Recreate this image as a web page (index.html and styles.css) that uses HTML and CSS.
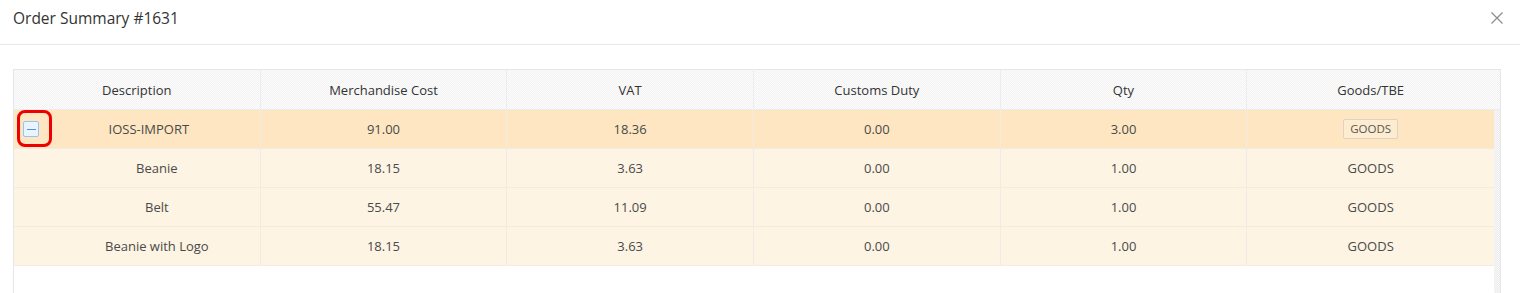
FILE: index.html
```html
<!DOCTYPE html>
<html>
<head>
<meta charset="utf-8">
<link rel="stylesheet" href="styles.css">
</head>
<body>
<div class="modal">
  <div class="modal-header">
    <div class="modal-title">Order Summary #1631</div>
    <button class="close" aria-label="Close">
      <svg width="12" height="12" viewBox="0 0 12 12"><path d="M0.5 0.5 L11.5 11.5 M11.5 0.5 L0.5 11.5" stroke="#8c8c8c" stroke-width="1.2" fill="none"/></svg>
    </button>
  </div>
  <div class="modal-body">
    <div class="table">
      <div class="thead">
        <div class="th">Description</div>
        <div class="th">Merchandise Cost</div>
        <div class="th">VAT</div>
        <div class="th">Customs Duty</div>
        <div class="th">Qty</div>
        <div class="th last">Goods/TBE</div>
      </div>
      <div class="tbody-wrap">
        <div class="tbody">
          <div class="tr parent">
            <div class="td first">
              <span class="expand"><span class="minus"></span></span>
              <span class="mark"></span>
              IOSS-IMPORT
            </div>
            <div class="td">91.00</div>
            <div class="td">18.36</div>
            <div class="td">0.00</div>
            <div class="td">3.00</div>
            <div class="td last"><span class="tag">GOODS</span></div>
          </div>
          <div class="tr child">
            <div class="td first">Beanie</div>
            <div class="td">18.15</div>
            <div class="td">3.63</div>
            <div class="td">0.00</div>
            <div class="td">1.00</div>
            <div class="td last">GOODS</div>
          </div>
          <div class="tr child">
            <div class="td first">Belt</div>
            <div class="td">55.47</div>
            <div class="td">11.09</div>
            <div class="td">0.00</div>
            <div class="td">1.00</div>
            <div class="td last">GOODS</div>
          </div>
          <div class="tr child">
            <div class="td first">Beanie with Logo</div>
            <div class="td">18.15</div>
            <div class="td">3.63</div>
            <div class="td">0.00</div>
            <div class="td">1.00</div>
            <div class="td last">GOODS</div>
          </div>
        </div>
        <div class="scrollbar"></div>
      </div>
    </div>
  </div>
</div>
</body>
</html>
```
FILE: styles.css
```css
html, body {
  margin: 0;
  padding: 0;
  background: #ffffff;
}
body {
  font-family: "Open Sans", "Noto Sans", sans-serif;
  color: #333;
  overflow: hidden;
}
.modal {
  width: 1520px;
}
.modal-header {
  display: flex;
  align-items: center;
  justify-content: space-between;
  padding: 7px 17px 15px 13px;
  height: 22px;
  border-bottom: 1px solid #e8e8e8;
}
.modal-title {
  font-size: 15.5px;
  line-height: 22px;
  color: #333;
}
.close {
  border: 0;
  background: transparent;
  padding: 0;
  width: 12px;
  height: 12px;
  display: flex;
}
.modal-body {
  padding: 24px 19px 0 13px;
}
.table {
  border: 1px solid #e6e6ea;
  border-bottom: 0;
  height: 224px;
  display: flex;
  flex-direction: column;
}
.thead {
  display: grid;
  grid-template-columns: repeat(6, 1fr);
  padding-right: 6px;
  height: 39px;
  border-bottom: 1px solid #ececec;
  background: repeating-conic-gradient(#f2f2f2 0 25%, #fdfdfd 0 50%) 0 0 / 2px 2px;
}
.th {
  display: flex;
  align-items: center;
  justify-content: center;
  font-size: 13px;
  color: #333;
  border-right: 1px solid #ececec;
}
.th.last {
  border-right: 0;
}
.tbody-wrap {
  flex: 1;
  display: flex;
}
.tbody {
  flex: 1;
}
.scrollbar {
  width: 6px;
  background: repeating-conic-gradient(#ececec 0 25%, #f8f8f8 0 50%) 0 0 / 2px 2px;
}
.tr {
  display: grid;
  grid-template-columns: repeat(6, 1fr);
  height: 38px;
  border-bottom: 1px solid #f1ebe2;
}
.tr.parent {
  background: #fde6c1;
}
.tr.child {
  background: #fdf4e4;
}
.td {
  display: flex;
  align-items: center;
  justify-content: center;
  font-size: 13px;
  color: #4a4a4a;
  border-right: 1px solid #f0ebe4;
}
.td.last {
  border-right: 0;
}
.td.first {
  position: relative;
  padding-left: 40px;
}
.tr.parent .td.first {
  padding-left: 24px;
}
.expand {
  position: absolute;
  left: 9px;
  top: 11px;
  width: 14px;
  height: 14px;
  border: 1px solid #94c4f0;
  border-radius: 2px;
  background: #eaf4fe;
  display: flex;
  align-items: center;
  justify-content: center;
}
.minus {
  width: 9px;
  height: 1px;
  background: #4f95db;
}
.mark {
  position: absolute;
  left: 3px;
  top: 0px;
  width: 29px;
  height: 31px;
  border: 3px solid #ee0000;
  border-radius: 8px;
}
.tag {
  display: inline-block;
  font-size: 11.5px;
  line-height: 18px;
  padding: 0 6px;
  border: 1px solid #dcd3c5;
  border-radius: 2px;
  background: #fdeccf;
  color: #555;
}
```
